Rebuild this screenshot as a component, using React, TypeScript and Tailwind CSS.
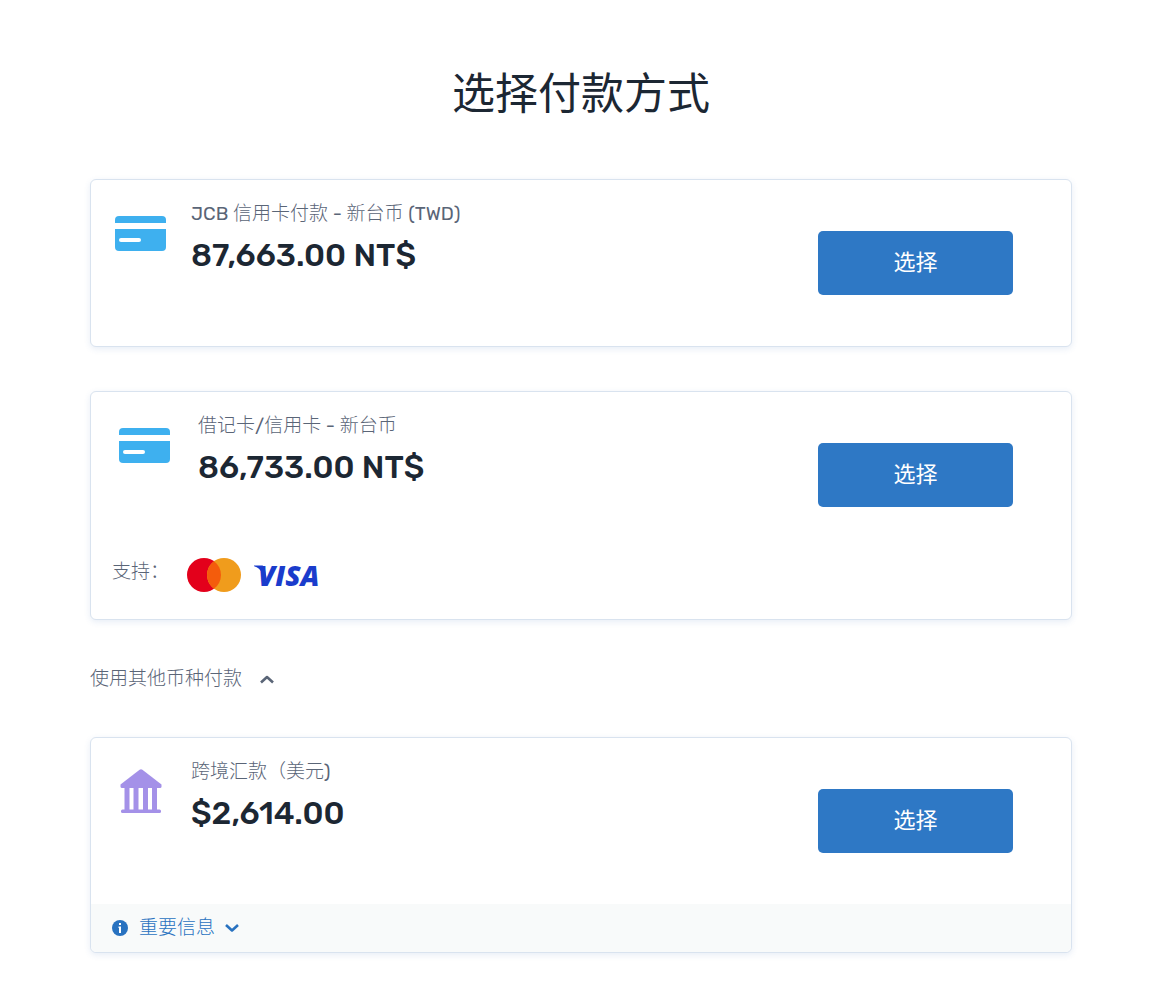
import { useState, type ReactNode } from 'react';

function CardIcon() {
    return (
        <svg width="51" height="35" viewBox="0 0 51 35" aria-hidden="true">
            <path d="M4 0h43a4 4 0 0 1 4 4v3H0V4a4 4 0 0 1 4-4z" fill="#3eb0ef" />
            <path d="M0 13h51v18a4 4 0 0 1-4 4H4a4 4 0 0 1-4-4z" fill="#3eb0ef" />
            <rect x="4" y="22" width="22" height="4" rx="2" fill="#fff" />
        </svg>
    );
}

function BankIcon() {
    return (
        <svg width="42" height="44" viewBox="0 0 42 44" fill="#a491e8" aria-hidden="true">
            <path d="M19.600.7a2.500 2.500 0 0 1 2.800 0L41.500 15.500v2a1.500 1.500 0 0 1-1.500 1.500H2a1.500 1.500 0 0 1-1.500-1.500v-2z" />
            <path d="M4.500 18h5v23h-5zM13.500 18h5v23h-5zM23 18h5v23h-5zM32 18h5v23h-5z" />
            <rect x="1" y="40.500" width="40" height="3.500" rx="1.500" />
        </svg>
    );
}

function MastercardLogo() {
    return (
        <svg width="54" height="34" viewBox="0 0 54 34" role="img" aria-label="Mastercard">
            <circle cx="17" cy="17" r="17" fill="#e3001b" />
            <circle cx="37" cy="17" r="17" fill="#f09c1c" />
            <path d="M27 3.250a17 17 0 0 1 0 27.500a17 17 0 0 1 0-27.500z" fill="#f45c0c" />
        </svg>
    );
}

function VisaLogo() {
    return (
        <svg width="72" height="34" viewBox="0 0 72 34" fill="#1a3ccc" className="overflow-visible" role="img" aria-label="Visa">
            <path d="M1 7.500h8.500l2 1.500 2.500 13-2.500 1L9 15C7.500 11.500 5 9.300 1 8.200z" />
            <text x="5" y="28" fontSize="28" fontWeight="800" fontStyle="italic" fontFamily="'Open Sans', sans-serif">VISA</text>
        </svg>
    );
}

function Chevron({ up, className }: { up?: boolean; className?: string }) {
    return (
        <svg width="14" height="10" viewBox="0 0 14 10" fill="none" stroke="currentColor" strokeWidth="2.600" strokeLinejoin="round" className={className} aria-hidden="true">
            <path d={up ? 'M1 8.500L7 3l6 5.500' : 'M1 2l6 5.500L13 2'} />
        </svg>
    );
}

type PaymentCardProps = {
    icon: ReactNode;
    title: string;
    amount: string;
    wide?: boolean;
    children?: ReactNode;
};

function PaymentCard({ icon, title, amount, wide, children }: PaymentCardProps) {
    return (
        <section className="rounded-md border border-[#d9e3ef] bg-white shadow-[0_2px_6px_rgba(60,110,180,0.12)]">
            <div className="flex items-start pr-[58px]">
                <div className={wide ? 'flex w-[107px] shrink-0 justify-center' : 'flex w-[100px] shrink-0 justify-center pr-px'}>
                    {icon}
                </div>
                <div className="flex-1 pt-5">
                    <h2 className="text-[19px] leading-7 text-[#5a6577]">{title}</h2>
                    <p className="mt-[7px] text-[32px] leading-10 font-medium text-[#1c2733]">{amount}</p>
                </div>
                <button type="button" className="my-[51px] h-16 w-[195px] shrink-0 rounded-[5px] bg-[#2e78c5] pb-px font-[Rubik,Roboto,'Noto_Sans_CJK_SC',sans-serif] text-[22px] text-white">
                    选择
                </button>
            </div>
            {children}
        </section>
    );
}

export default function App() {
    const [showOther, setShowOther] = useState(true);
    const [showInfo, setShowInfo] = useState(false);

    return (
        <main className="min-h-screen bg-white pt-16 pr-[99px] pb-8 pl-[90px] font-[Rubik,Roboto,'Noto_Sans_CJK_SC_Light','Noto_Sans_CJK_SC',sans-serif]">
            <h1 className="text-center font-[Rubik,Roboto,'Noto_Sans_CJK_SC',sans-serif] text-[43px] leading-[62px] text-[#1c2733]">选择付款方式</h1>

            <div className="mt-[53px] flex flex-col gap-11">
                <PaymentCard icon={<div className="pt-9"><CardIcon /></div>} title="JCB 信用卡付款 - 新台币 (TWD)" amount="87,663.00 NT$" />
                <PaymentCard icon={<div className="pt-9"><CardIcon /></div>} title="借记卡/信用卡 - 新台币" amount="86,733.00 NT$" wide>
                    <div className="flex h-[61px] items-start pl-[21px] text-[19px] leading-7 text-[#5a6577]">
                        <span className="w-[75px]">支持：</span>
                        <div className="flex items-center gap-3">
                            <MastercardLogo />
                            <VisaLogo />
                        </div>
                    </div>
                </PaymentCard>
            </div>

            <button
                type="button"
                aria-expanded={showOther}
                onClick={() => setShowOther(!showOther)}
                className="mt-[45px] flex items-center gap-[18px] text-[19px] leading-7 text-[#5a6577]"
            >
                使用其他币种付款
                <Chevron up={showOther} />
            </button>

            {showOther && (
                <div className="mt-11">
                    <PaymentCard icon={<div className="pt-[31px]"><BankIcon /></div>} title="跨境汇款（美元)" amount="$2,614.00">
                        <div className="rounded-b-md bg-[#f8fafa] px-[21px]">
                            <button
                                type="button"
                                aria-expanded={showInfo}
                                onClick={() => setShowInfo(!showInfo)}
                                className="flex h-12 items-center text-[19px] leading-7 text-[#2872c0]"
                            >
                                <svg width="16" height="16" viewBox="0 0 16 16" className="mr-[11px]" aria-hidden="true">
                                    <circle cx="8" cy="8" r="8" fill="#2872c0" />
                                    <path d="M7 3h2v2H7zM6.500 6.500H9V13H7V8h-.5z" fill="#fff" />
                                </svg>
                                重要信息
                                <Chevron up={showInfo} className="ml-[10px]" />
                            </button>
                            {showInfo && <p className="pb-4 text-base text-[#5a6577]">$2,614.00</p>}
                        </div>
                    </PaymentCard>
                </div>
            )}
        </main>
    );
}
